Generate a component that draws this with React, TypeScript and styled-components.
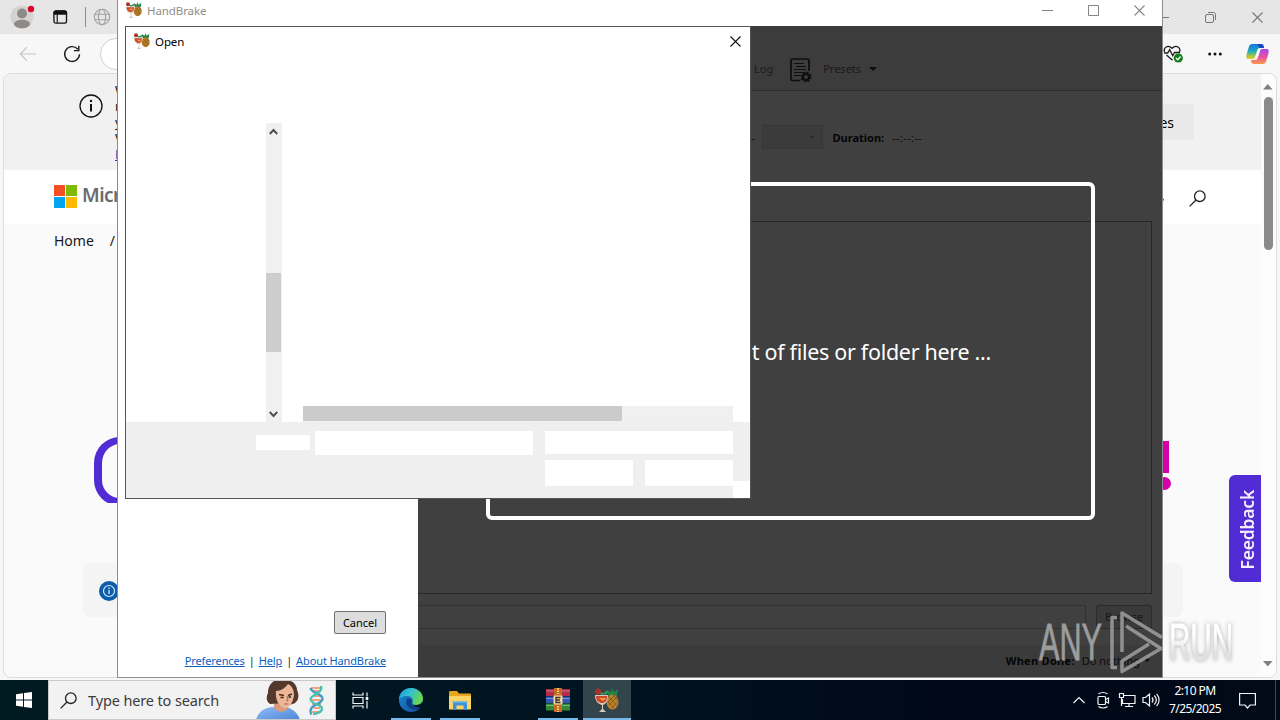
import React, { FC, ReactNode } from "react";
import styled, { createGlobalStyle, css } from "styled-components";

const GlobalStyle = createGlobalStyle`
  * {
    box-sizing: border-box;
  }

  body {
    margin: 0;
    overflow: hidden;
    font-family: "Noto Sans", "Open Sans", sans-serif;
    font-size: 12px;
  }

  svg {
    display: block;
    flex: none;
  }
`;

const Desktop = styled.div`
  position: relative;
  display: flex;
  flex-direction: column;
  width: 1280px;
  height: 720px;
  overflow: hidden;
  background: #f0f3f8;
`;

/* ---------- browser ---------- */

const Browser = styled.div`
  display: flex;
  flex-direction: column;
  height: 680px;
  background: #f7f7f7;
`;

const TabStrip = styled.div`
  display: flex;
  align-items: center;
  justify-content: space-between;
  height: 34px;
  padding: 0 17px 0 10px;
  background: #e6e6e6;
`;

const AddressRow = styled.div`
  display: flex;
  align-items: center;
  justify-content: space-between;
  height: 39px;
  padding: 0 11px 0 19px;
`;

const Group = styled.div<{ $gap: number }>`
  display: flex;
  align-items: center;
  gap: ${(props) => props.$gap}px;
`;

const UrlPill = styled.div`
  width: 200px;
  height: 32px;
  margin-left: -7px;
  border: 1px solid #d2d2d2;
  border-radius: 16px;
  background: #fff;
`;

const TabDivider = styled.div`
  width: 1px;
  height: 20px;
  margin: 0 -8px 0 0;
  background: #8c8c8c;
`;

const PageFrame = styled.div`
  position: relative;
  display: flex;
  height: 605px;
  margin: 0 3px 0 3px;
  border: 1px solid #dcdcdc;
  border-radius: 8px;
  overflow: hidden;
  background: #fafafa;
`;

const Page = styled.div`
  width: 1257px;
  flex: none;
`;

const PageScroll = styled.div`
  display: flex;
  flex-direction: column;
  align-items: center;
  flex: 1;
  padding: 10px 1px 10px 0;
  background: #fcfcfc;
`;

const PageThumb = styled.div`
  width: 9px;
  height: 153px;
  margin-top: 7px;
  border-radius: 5px;
  background: #8a8a8a;
`;

const Spacer = styled.div`
  flex: 1;
`;

const Banner = styled.div`
  display: flex;
  height: 96px;
  padding: 0 67px 0 75px;
  background: #f1f1f1;
`;

const BannerIcon = styled.div`
  padding-top: 20px;
`;

const BannerText = styled.div`
  display: flex;
  flex-direction: column;
  margin-left: 12px;
  padding-top: 8px;
  font-size: 13px;
  line-height: 16px;
  color: #111;

  a {
    color: #0a45b5;
    text-decoration: underline;
  }
`;

const BannerButton = styled.div`
  width: 120px;
  height: 36px;
  margin: 30px 0 0 auto;
  padding: 1px 20px 0 0;
  background: #e9e9e9;
  font-size: 14px;
  line-height: 36px;
  text-align: right;
`;

const SiteHeader = styled.div`
  display: flex;
  align-items: center;
  height: 54px;
  padding: 0 55px 2px 50px;
  background: #fff;
`;

const HeaderSearch = styled.div`
  padding-top: 5px;
`;

const HeaderDot = styled.div`
  width: 3px;
  height: 3px;
  margin: 6px 25px 0 0;
  border-radius: 50%;
  background: #666;
`;

const Tiles = styled.div`
  display: grid;
  grid-template-columns: 11px 11px;
  grid-template-rows: 11px 11px;
  gap: 1px;
`;

const Tile = styled.div<{ $color: string }>`
  background: ${(props) => props.$color};
`;

const Brand = styled.div`
  margin: -2px 0 0 5px;
  font-size: 19px;
  font-weight: 600;
  letter-spacing: -0.5px;
  color: #6b6b6b;
`;

const Crumbs = styled.div`
  display: flex;
  gap: 16px;
  height: 34px;
  padding-left: 50px;
  font-size: 14px;
  line-height: 34px;
  color: #171717;
`;

const Hero = styled.div`
  display: flex;
  justify-content: space-between;
  height: 66px;
  margin-top: 179px;
  padding: 0 90px;
  overflow: hidden;
`;

const HeroLetter = styled.div`
  width: 70px;
  height: 69px;
  border: 8px solid #512bd4;
  border-width: 7px 9px 8px 8px;
  border-radius: 26px;
`;

const HeroMark = styled.div`
  display: flex;
  flex-direction: column;
  align-items: center;
  gap: 4px;
  padding-top: 4px;
`;

const MarkStem = styled.div`
  width: 9px;
  height: 32px;
  background: #d600aa;
`;

const MarkDot = styled.div`
  width: 13px;
  height: 13px;
  border-radius: 50%;
  background: #d600aa;
`;

const InfoCard = styled.div`
  display: flex;
  align-items: center;
  width: 1100px;
  height: 54px;
  margin: 60px 0 0 79px;
  padding: 2px 0 0 16px;
  border-radius: 8px;
  background: #f4f4f4;
`;

const FeedbackTab = styled.div`
  position: absolute;
  top: 401px;
  right: 15px;
  display: flex;
  align-items: center;
  justify-content: center;
  width: 32px;
  height: 107px;
  border-radius: 6px 0 0 6px;
  background: #512bd4;
  color: #f4ecff;
  font-size: 17.5px;
  font-weight: 600;
  letter-spacing: -0.2px;

  span {
    writing-mode: vertical-rl;
    transform: rotate(180deg);
    padding: 0 3px 2px 0;
  }
`;

/* ---------- HandBrake window ---------- */

const AppWindow = styled.div`
  position: absolute;
  top: -1px;
  left: 117px;
  display: flex;
  flex-direction: column;
  width: 1046px;
  height: 679px;
  border: 1px solid #8d8d8d;
  background: #fff;
`;

const AppTitle = styled.div`
  display: flex;
  align-items: center;
  height: 26px;
  padding: 0 17px 6px 8px;
  color: #8e8e8e;
`;

const TitleText = styled.span`
  flex: 1;
  margin-left: 5px;
  font-size: 11.5px;
  letter-spacing: -0.1px;
`;

const AppBody = styled.div`
  display: flex;
  flex: 1;
`;

const SourcePane = styled.div`
  display: flex;
  flex-direction: column;
  align-items: flex-end;
  justify-content: flex-end;
  gap: 19px;
  width: 300px;
  padding: 0 32px 8px 0;
`;

const CancelButton = styled.button`
  width: 52px;
  height: 23px;
  padding: 0;
  border: 1px solid #707070;
  border-radius: 2px;
  background: #dddddd;
  font-family: inherit;
  font-size: 11px;
  color: #000;
`;

const LinkRow = styled.div`
  display: flex;
  gap: 4px;
  height: 16px;
  font-size: 11px;
  line-height: 16px;
  letter-spacing: -0.12px;
  color: #222;
`;

const PaneLink = styled.a`
  color: #0a5fbe;
  text-decoration: underline;
`;

const DimmedPane = styled.div`
  position: relative;
  display: flex;
  flex-direction: column;
  flex: 1;
  background: #404040;
  color: #0c0c0c;
  font-size: 11px;
`;

const Toolbar = styled.div`
  display: flex;
  align-items: flex-start;
  height: 65px;
  padding: 21px 0 0 336px;
  border-bottom: 1px solid #2f2f2f;
  background: #3c3c3c;
  color: #1b1b1b;
`;

const ToolLabel = styled.span<{ $left?: number }>`
  height: 42px;
  margin-left: ${(props) => props.$left || 0}px;
  line-height: 44px;
`;

const ToolIcon = styled.div<{ $left: number; $top: number }>`
  margin: ${(props) => props.$top}px 0 0 ${(props) => props.$left}px;
`;

const TitleRow = styled.div`
  display: flex;
  align-items: center;
  height: 24px;
  margin: 34px 0 72px;
  padding-left: 333px;
`;

const Combo = styled.div`
  display: flex;
  align-items: center;
  justify-content: flex-end;
  width: 61px;
  height: 24px;
  margin: 0 10px 0 7px;
  padding-right: 7px;
  border: 1px solid #373737;
  background: #3b3b3b;
`;

const Bold = styled.b`
  font-weight: 700;
  color: #050505;
`;

const Timecode = styled.span`
  margin-left: 8px;
  letter-spacing: 0.35px;
`;

const TabPanel = styled.div`
  height: 373px;
  margin-right: 10px;
  border: 1px solid #262626;
  border-left: 0;
  padding-right: 5px;

  &::after {
    content: "";
    display: block;
    height: 100%;
    border-right: 1px solid #393939;
  }
`;

const SaveRow = styled.div`
  display: flex;
  gap: 10px;
  height: 24px;
  margin: 11px 10px 16px 0;
`;

const PathField = styled.div`
  flex: 1;
  border: 1px solid #323232;
  border-left: 0;
`;

const BrowseButton = styled.div`
  width: 56px;
  border: 1px solid #2b2b2b;
  border-radius: 2px;
  line-height: 22px;
  text-align: center;
  background: #3a3a3a;
  color: #161616;
`;

const DoneRow = styled.div`
  display: flex;
  align-items: center;
  justify-content: flex-end;
  flex: 1;
  padding: 0 12px 2px 0;
  background: #3b3b3b;

  b {
    margin-right: 7px;
    letter-spacing: 0.3px;
  }

  svg {
    margin-left: 4px;
  }
`;

const DropZone = styled.div`
  position: absolute;
  top: 156px;
  left: 68px;
  display: flex;
  align-items: center;
  justify-content: flex-end;
  width: 609px;
  height: 338px;
  padding: 0 100px 0 0;
  border: 4px solid #fff;
  border-radius: 6px;
  color: #fff;
  font-size: 21.5px;
  letter-spacing: -0.3px;
  white-space: pre;
`;

/* ---------- Open dialog ---------- */

const Dialog = styled.div`
  position: absolute;
  top: 26px;
  left: 125px;
  display: flex;
  flex-direction: column;
  width: 626px;
  height: 473px;
  border: 1px solid #555;
  background: #fff;
`;

const DialogTitle = styled.div`
  display: flex;
  align-items: center;
  height: 29px;
  padding: 0 9.500px 1px 8px;
  color: #000;
`;

const DialogBody = styled.div`
  display: flex;
  height: 366px;
  padding: 67px 17px 0 140px;
`;

const TreeScroll = styled.div`
  display: flex;
  flex-direction: column;
  align-items: center;
  width: 16px;
  padding: 5px 1px 4px 0;
  background: #f0f0f0;
`;

const TreeThumb = styled.div`
  width: 15px;
  height: 79px;
  margin-top: 138px;
  background: #cdcdcd;
`;

const FileList = styled.div`
  display: flex;
  align-items: flex-end;
  flex: 1;
  margin-left: 21px;
`;

const ListScroll = styled.div`
  width: 100%;
  height: 16px;
  background: #f0f0f0;
`;

const ListThumb = styled.div`
  width: 319px;
  height: 15px;
  background: #cbcbcb;
`;

const DialogFooter = styled.div`
  display: flex;
  height: 76px;
  background: #efefef;
`;

const Fields = styled.div`
  display: flex;
  flex-direction: column;
  gap: 5px;
  width: 607px;
  padding: 9px 0 0 130px;
`;

const FieldRow = styled.div`
  display: flex;
  justify-content: flex-end;
`;

const Blank = styled.div<{ $w: number; $h: number; $left: number; $top?: number }>`
  width: ${(props) => props.$w}px;
  height: ${(props) => props.$h}px;
  margin: ${(props) => props.$top || 0}px 0 0 ${(props) => props.$left}px;
  background: #fff;
`;

const Grip = styled.div`
  align-self: flex-end;
  width: 17px;
  height: 17px;
  background: #fff;
`;

/* ---------- taskbar ---------- */

const Taskbar = styled.div`
  display: flex;
  height: 40px;
  background: linear-gradient(90deg, #001a22 0%, #00141f 45%, #00081a 75%, #020a18 100%);
  color: #fff;
`;

const StartButton = styled.div`
  display: flex;
  align-items: center;
  justify-content: center;
  width: 48px;
`;

const SearchBox = styled.div`
  display: flex;
  align-items: center;
  width: 288px;
  padding-left: 11px;
  border: 1px solid #c9c9c9;
  background: #f2f2f2;
  color: #3b3b3b;
  font-size: 14.5px;
  letter-spacing: -0.13px;
`;

const SearchText = styled.span`
  width: 168px;
  margin-left: 11px;
  white-space: nowrap;
`;

const DnaSlot = styled.div`
  margin-left: 3px;
`;

const TaskButton = styled.div<{ $line?: "short" | "full"; $active?: boolean; $left?: number }>`
  position: relative;
  display: flex;
  align-items: center;
  justify-content: center;
  width: 48px;
  margin-left: ${(props) => (props.$left === undefined ? 1 : props.$left)}px;
  background: ${(props) => (props.$active ? "#34444d" : "transparent")};

  ${(props) =>
    props.$line &&
    css`
      &::after {
        content: "";
        position: absolute;
        bottom: 0;
        left: ${props.$line === "full" ? 0 : 4}px;
        right: ${props.$line === "full" ? 0 : 4}px;
        height: 2px;
        background: #76b9ed;
      }
    `}
`;

const Tray = styled.div`
  display: flex;
  align-items: center;
  gap: 6px;
  margin-left: auto;
  padding-right: 4px;
`;

const Clock = styled.div`
  width: 62px;
  margin-left: -2px;
  font-size: 12px;
  line-height: 18px;
  letter-spacing: -0.55px;
  text-align: center;
`;

const NoticeSlot = styled.div`
  display: flex;
  align-items: center;
  width: 42px;
  height: 40px;
  padding-left: 7px;
  margin-right: -5px;
`;

const PeekEdge = styled.div`
  width: 1px;
  height: 40px;
  background: #414854;
`;

const Watermark = styled.svg`
  position: absolute;
  top: 600px;
  left: 1030px;
`;

/* ---------- icons ---------- */

const FruitIcon: FC<{ size: number }> = ({ size }) => (
  <svg width={size} height={size} viewBox="0 0 24 24">
    <path d="M13 8l-1-6 4 2 1-4 2 4 4-3-1 7z" fill="#238249" />
    <path d="M4 3l4 2 5-3-1 4-6 1z" fill="#38965a" />
    <ellipse cx="17.500" cy="14" rx="6" ry="7.500" fill="#b9822c" />
    <path d="M14 9l8 9M13 14l6 6M18 7l5 6M22 9l-8 8M20 7l-7 7M22 14l-5 6" stroke="#7d5119" strokeWidth="0.800" />
    <path d="M0 7h13c0 6-2 9-5 10v4l3 3H4l3-3v-4C3 16 0 13 0 7z" fill="#d9cbb9" />
    <path d="M1 8h11c0 5-2 7-5 7s-6-2-6-7z" fill="#d2472c" />
    <circle cx="3" cy="3.500" r="3" fill="#a8322a" />
    <path d="M4 10l4 3 3-3" fill="#f1a541" />
  </svg>
);

const CloseIcon: FC<{ size: number; color: string }> = ({ size, color }) => (
  <svg width={size} height={size} viewBox="0 0 11 11" stroke={color} strokeWidth="1.100" fill="none">
    <path d="M.5.5l10 10M10.500.5l-10 10" />
  </svg>
);

const CaptionButtons: FC = () => (
  <Group $gap={35}>
    <svg width="11" height="11" stroke="#858585">
      <path d="M0 5.500h11" />
    </svg>
    <svg width="11" height="11" fill="none" stroke="#858585">
      <path d="M.5.5h10v10H.5z" />
    </svg>
    <CloseIcon size={11} color="#858585" />
  </Group>
);

const AvatarIcon: FC = () => (
  <svg width="26" height="28" viewBox="0 0 26 28">
    <circle cx="12" cy="14" r="11.500" fill="#d5d2d0" />
    <circle cx="12" cy="10.500" r="5" fill="#8e8a88" />
    <ellipse cx="12" cy="21" rx="8" ry="4.200" fill="#8e8a88" />
    <circle cx="21" cy="6" r="3.200" fill="#d9082b" />
  </svg>
);

const WorkspaceIcon: FC = () => (
  <svg width="15" height="16" viewBox="0 0 16 16" fill="none" stroke="#111">
    <rect x="1" y="1.600" width="13.400" height="13" rx="2" strokeWidth="1.400" />
    <path d="M1 5V3.500a2 2 0 0 1 2-2h9.500a2 2 0 0 1 2 2V5z" fill="#111" />
    <path d="M4.500 5v9" strokeWidth="1.200" />
  </svg>
);

const GlobeIcon: FC = () => (
  <svg width="18" height="18" viewBox="0 0 18 18" fill="none" stroke="#a2a2a2" strokeWidth="1.100">
    <circle cx="9" cy="9" r="7.700" />
    <ellipse cx="9" cy="9" rx="3.600" ry="7.700" />
    <path d="M2 6.200h14M2 11.800h14" />
  </svg>
);

const BackIcon: FC = () => (
  <svg width="18" height="16" viewBox="0 0 18 16" fill="none" stroke="#c6c6c6" strokeWidth="1.200">
    <path d="M17 8H1.500M8 1.200L1.300 8 8 14.800" />
  </svg>
);

const RefreshIcon: FC = () => (
  <svg width="18" height="18" viewBox="0 0 18 18" fill="none" stroke="#1c1c1c" strokeWidth="1.400">
    <path d="M16.500 9.300A7.400 7.400 0 1 1 14.800 4.300" />
    <path d="M11 5.600h4.800V.8" />
  </svg>
);

const HeartIcon: FC = () => (
  <svg width="21" height="20" viewBox="0 0 21 20" fill="none" stroke="#1b1b1b" strokeWidth="1.300">
    <path d="M1.600 8C0 3.300 5 .5 9 4.300 13 .5 18.300 3.300 16.500 8M3.500 11l6 5.200" />
    <path d="M1 9h3.700l2-3.300 3 6L11.500 8.500H17" />
    <circle cx="15.300" cy="14" r="4.600" fill="#12801a" stroke="none" />
    <path d="M13 14l1.700 1.700 3-3.200" stroke="#fff" />
  </svg>
);

const MoreIcon: FC = () => (
  <svg width="14" height="4" fill="#111">
    <circle cx="1.700" cy="2" r="1.500" />
    <circle cx="7" cy="2" r="1.500" />
    <circle cx="12.300" cy="2" r="1.500" />
  </svg>
);

const CopilotIcon: FC = () => (
  <svg width="23" height="22" viewBox="0 0 23 22">
    <defs>
      <linearGradient id="cpBlue" x1="0" y1="0" x2="0" y2="1">
        <stop offset="0" stopColor="#1472e8" />
        <stop offset=".5" stopColor="#25aeb5" />
        <stop offset=".8" stopColor="#a7c83e" />
        <stop offset="1" stopColor="#f6c42c" />
      </linearGradient>
      <linearGradient id="cpPink" x1="0" y1="0" x2="0" y2="1">
        <stop offset="0" stopColor="#a34bec" />
        <stop offset=".5" stopColor="#e84ea6" />
        <stop offset="1" stopColor="#ff984a" />
      </linearGradient>
    </defs>
    <path d="M6 1h9c2 0 2.600 1.600 3 4l-4-.1c-2 0-2.500 1-3 3L9 14c-.5 1.500-1 2-3 2H2.500C0 16 0 14 .7 11L3 3.500C3.500 2 4.500 1 6 1z" fill="url(#cpBlue)" />
    <path d="M17 21H8c-2 0-2.600-1.600-3-4l4 .1c2 0 2.500-1 3-3L14 8c.5-1.500 1-2 3-2h3.500C23 6 23 8 22.300 11L20 18.500c-.5 1.500-1.500 2.500-3 2.500z" fill="url(#cpPink)" />
    <path d="M11.500 1H15c2 0 2.600 1.600 3 4l-4.500 0z" fill="#1746c4" />
    <path d="M12.500 8L9.800 14.200c1 .3 1.700 0 2.200-1L14 7.500z" fill="#fff" />
  </svg>
);

const InfoIcon: FC = () => (
  <svg width="24" height="24" viewBox="0 0 24 24" fill="none" stroke="#111">
    <circle cx="12" cy="12" r="11" strokeWidth="1.300" />
    <path d="M12 10v7.500" strokeWidth="2" />
    <circle cx="12" cy="7" r="1.200" fill="#111" stroke="none" />
  </svg>
);

const BadgeIcon: FC = () => (
  <svg width="20" height="20" viewBox="0 0 20 20">
    <circle cx="10" cy="10" r="10" fill="#0b5cab" />
    <circle cx="10" cy="10" r="5.500" fill="none" stroke="#d7eafa" strokeWidth="1.200" />
    <path d="M10 9v4M10 6.600v1.300" stroke="#d7eafa" strokeWidth="1.300" />
  </svg>
);

const SearchIcon: FC<{ color: string }> = ({ color }) => (
  <svg width="17" height="17" viewBox="0 0 17 17" fill="none" stroke={color} strokeWidth="1.300">
    <circle cx="10.800" cy="6.200" r="5.300" />
    <path d="M7 10L.6 16.400" />
  </svg>
);

const TriangleIcon: FC<{ down?: boolean }> = ({ down }) => (
  <svg width="10" height="6" fill="#7f7f7f">
    <path d={down ? "M0 0h9.500L4.800 5.500z" : "M0 5.500h9.500L4.800 0z"} />
  </svg>
);

const CaretIcon: FC<{ color: string; size?: number }> = ({ color, size = 8 }) => (
  <svg width={size} height={size / 2} viewBox="0 0 8 4" fill={color}>
    <path d="M0 0h8L4 4z" />
  </svg>
);

const ScrollChevron: FC<{ down?: boolean }> = ({ down }) => (
  <svg width="9" height="7" fill="none" stroke="#4d4d4d" strokeWidth="1.900">
    <path d={down ? "M.8 1l3.700 4L8.200 1" : "M.8 6l3.700-4 3.700 4"} />
  </svg>
);

const PresetsIcon: FC = () => (
  <svg width="22" height="25" viewBox="0 0 22 25" fill="none" stroke="#0e0e0e">
    <path d="M10 22.500H2.500a1.500 1.500 0 0 1-1.500-1.500V2.500A1.500 1.500 0 0 1 2.500 1h15A1.500 1.500 0 0 1 19 2.500V13" strokeWidth="1.700" />
    <path d="M4 5.500h10M6 8.500h10M4 11.500h12M4 14.500h9M4 17.500h6" strokeWidth="1.200" />
    <circle cx="16" cy="19" r="3.200" strokeWidth="2.400" />
    <circle cx="16" cy="19" r="4.700" strokeWidth="1.800" strokeDasharray="1.850 1.850" />
  </svg>
);

const WindowsIcon: FC = () => (
  <svg width="16" height="16" viewBox="0 0 16 16" fill="#fff">
    <path d="M0 2.300L7 1.300v6.200H0zM8 1.100L16 0v7.500H8zM0 8.500h7v6.200l-7-1zM8 8.500h8V16l-8-1.100z" />
  </svg>
);

const PortraitIcon: FC = () => (
  <svg width="50" height="38" viewBox="0 1 50 38">
    <defs>
      <linearGradient id="shirt" x1="0" y1="0" x2="1" y2="1">
        <stop offset="0" stopColor="#8fbcf5" />
        <stop offset="1" stopColor="#4d86d8" />
      </linearGradient>
    </defs>
    <path d="M0 40c2-8 8-12 16-13l14 0c7 2 12 6 14 13z" fill="url(#shirt)" />
    <path d="M18 22h14v6c-3 5-10 5-14 0z" fill="#d99b7e" />
    <path d="M14 24c-4-3-4-7-2-11C12 5 17-1 25 0c8-2 16 3 16 10 2 4 2 9-1 12-4 4-8 2-11 1z" fill="#54382d" />
    <path d="M20 11c5 0 9-3 12-7 4 2 6 6 6 11-1 7-4 13-9 13-6-1-10-8-9-17z" fill="#ecb797" />
    <path d="M23 14.500l5 1M32 15.500l4-1.500" stroke="#442b22" strokeWidth="1.400" />
    <path d="M24.500 17.500h3M32.500 17h2.500" stroke="#2d2523" strokeWidth="1.300" />
    <path d="M31 16l1 4.500-2 .5M28 24h4.500" stroke="#ad644e" fill="none" />
  </svg>
);

const DnaIcon: FC = () => (
  <svg width="15" height="31" viewBox="0 0 15 31" fill="none">
    <path d="M2 3h9M3 6h9M5 11h6M3 15h9M3 19h9M5 23h6M3 27h9" stroke="#e98a5b" strokeWidth="1.300" />
    <path d="M1.500 3c1 6 12 5 12 11 0 5-12 5-12 12 0 2 0 3 1 3.500" stroke="#3d9bc9" strokeWidth="2.300" />
    <path d="M12 1c2 8-10 8-10.500 13C2 20 14 19 13 24c0 3-6 5-9 5" stroke="#48bfb3" strokeWidth="2.300" />
  </svg>
);

const TaskViewIcon: FC = () => (
  <svg width="17" height="17" viewBox="0 0 17 17" fill="none" stroke="#f4f4f4" strokeWidth="1.200">
    <path d="M1 .5v2.500h10V.5M1 16.500V14h10v2.500M1 5.500h10v6H1z" />
    <path d="M15 .5v4M15 9v7.500" />
    <path d="M15 5v3" strokeWidth="2.600" />
  </svg>
);

const EdgeIcon: FC = () => (
  <svg width="26" height="26" viewBox="0 0 26 26">
    <defs>
      <linearGradient id="edgeTop" x1="0" y1="0" x2="1" y2="0.400">
        <stop offset="0" stopColor="#2296de" />
        <stop offset=".5" stopColor="#31c2d3" />
        <stop offset="1" stopColor="#68d84f" />
      </linearGradient>
      <linearGradient id="edgeLow" x1="0" y1="0" x2="1" y2="1">
        <stop offset="0" stopColor="#1b8bd8" />
        <stop offset="1" stopColor="#114a94" />
      </linearGradient>
    </defs>
    <circle cx="13" cy="13" r="12" fill="url(#edgeLow)" />
    <path d="M1 13C1 5 7 1 13 1s12 4.500 12 10.500c0 4-3 6.500-7 6.500-3 0-4-1-3.500-2.500 1.500-3-1-6.500-5-6.500C5 9 1.500 11 1 13z" fill="url(#edgeTop)" />
    <path d="M9 12c-2 5 1 10 7 10.500 3 .2 5.500-1 7-2.500-3 1-10 0-9.500-4.500 1-2-1.500-5-4.500-3.500z" fill="#0c3f86" />
    <path d="M14.500 15.500c-.5 2 1 2.600 3.500 2.600 3 0 5.500-1 6.600-3.500l1 4.500-2.500 1.500c-3.500.5-8.500-1-8.600-5.100z" fill="#001720" />
  </svg>
);

const FolderIcon: FC = () => (
  <svg width="24" height="21" viewBox="0 0 24 21">
    <path d="M1 2.500C1 1.500 1.500 1 2.500 1H9l2 2.500h11c.7 0 1 .5 1 1V19H1z" fill="#e8a520" />
    <path d="M1 6h22v13.500H1z" fill="#fcd565" />
    <path d="M5 20v-8.500h14V20h-3.500v-4.500h-7V20z" fill="#3d93d9" />
    <path d="M4 12h16" stroke="#7bbdec" strokeWidth="1.200" />
  </svg>
);

const ArchiveIcon: FC = () => (
  <svg width="24" height="24" viewBox="0 0 24 24">
    <rect x="0" y="1" width="24" height="7" fill="#b22c4b" />
    <rect x="0" y="8.500" width="24" height="6.500" fill="#3257b8" />
    <rect x="0" y="15.500" width="24" height="7" fill="#328a38" />
    <path d="M0 3h24M0 10.500h24M0 17.500h24" stroke="#fff" strokeOpacity=".35" />
    <rect x="8" y="0" width="8" height="24" fill="#c4692b" />
    <path d="M12 0v6M12 18v6" stroke="#f4d36a" strokeWidth="2" strokeDasharray="1.500 1" />
    <rect x="7.500" y="7.500" width="9" height="9" rx="1" fill="#f0d9a0" />
    <path d="M14.500 9.500h-4.500v5h4.500M10 12h4" stroke="#402c20" strokeWidth="1.300" fill="none" />
  </svg>
);

const TrayIcon: FC<{ children: ReactNode }> = ({ children }) => (
  <svg width="18" height="18" viewBox="0 0 18 18" fill="none" stroke="#f3f3f3" strokeWidth="1.200">
    {children}
  </svg>
);

const AnyRun: FC = () => (
  <Watermark width="245" height="80" fontFamily="Liberation Sans, sans-serif" fontSize="52">
    <defs>
      <linearGradient id="runFade" x1="0" y1="0" x2="0" y2="1">
        <stop offset="0.400" stopColor="#ffffff" />
        <stop offset="0.700" stopColor="#e1e1e1" />
      </linearGradient>
    </defs>
    <text
      x="9"
      y="60"
      textLength="63"
      lengthAdjust="spacingAndGlyphs"
      fill="#9c9c9c"
      stroke="#9c9c9c"
      strokeWidth="0.800"
    >
      ANY
    </text>
    <g fill="none" stroke="#a0a0a0" strokeOpacity=".85" strokeWidth="3.500" strokeLinejoin="round">
      <path d="M87 17.500h-5v50h5M92 52V13l40 24.500M96 26l35 22.500-39 23V61l27-17" />
    </g>
    <text
      x="139"
      y="60"
      textLength="64"
      lengthAdjust="spacingAndGlyphs"
      fill="url(#runFade)"
      stroke="url(#runFade)"
      strokeWidth="0.800"
      style={{ filter: "drop-shadow(0 0 2px rgba(0,0,0,.3))" }}
    >
      RUN
    </text>
  </Watermark>
);

/* ---------- screens ---------- */

const BrowserWindow: FC = () => (
  <Browser>
    <TabStrip>
      <Group $gap={17}>
        <AvatarIcon />
        <WorkspaceIcon />
        <Group $gap={15}>
          <TabDivider />
          <GlobeIcon />
        </Group>
      </Group>
      <Group $gap={36}>
        <svg width="11" height="11" stroke="#777">
          <path d="M0 5.500h11" />
        </svg>
        <svg width="11" height="11" fill="none" stroke="#777">
          <rect x=".5" y="2.500" width="8" height="8" rx="1.500" />
          <path d="M3 .5h5.500a2 2 0 0 1 2 2V8" />
        </svg>
        <CloseIcon size={11} color="#777" />
      </Group>
    </TabStrip>
    <AddressRow>
      <Group $gap={26}>
        <BackIcon />
        <RefreshIcon />
        <UrlPill />
      </Group>
      <Group $gap={24}>
        <HeartIcon />
        <MoreIcon />
        <CopilotIcon />
      </Group>
    </AddressRow>
    <PageFrame>
      <Page>
        <Banner>
          <BannerIcon>
            <InfoIcon />
          </BannerIcon>
          <BannerText>
            <span>W</span>
            <span>m</span>
            <span>y</span>
            <span>V</span>
            <a>P</a>
          </BannerText>
          <BannerButton>es</BannerButton>
        </Banner>
        <SiteHeader>
          <Tiles>
            <Tile $color="#f25022" />
            <Tile $color="#7fba00" />
            <Tile $color="#00a4ef" />
            <Tile $color="#ffb900" />
          </Tiles>
          <Brand>Micr</Brand>
          <Spacer />
          <HeaderDot />
          <HeaderSearch>
            <SearchIcon color="#222" />
          </HeaderSearch>
        </SiteHeader>
        <Crumbs>
          <span>Home</span>
          <span>/</span>
        </Crumbs>
        <Hero>
          <HeroLetter />
          <HeroMark>
            <MarkStem />
            <MarkDot />
          </HeroMark>
        </Hero>
        <InfoCard>
          <BadgeIcon />
        </InfoCard>
      </Page>
      <PageScroll>
        <TriangleIcon />
        <PageThumb />
        <Spacer />
        <TriangleIcon down />
      </PageScroll>
      <FeedbackTab>
        <span>Feedback</span>
      </FeedbackTab>
    </PageFrame>
  </Browser>
);

const HandBrake: FC = () => (
  <AppWindow>
    <AppTitle>
      <FruitIcon size={16} />
      <TitleText>HandBrake</TitleText>
      <CaptionButtons />
    </AppTitle>
    <AppBody>
      <SourcePane>
        <CancelButton>Cancel</CancelButton>
        <LinkRow>
          <PaneLink>Preferences</PaneLink>|<PaneLink>Help</PaneLink>|
          <PaneLink>About HandBrake</PaneLink>
        </LinkRow>
      </SourcePane>
      <DimmedPane>
        <Toolbar>
          <ToolLabel>Log</ToolLabel>
          <ToolIcon $left={17} $top={11}>
            <PresetsIcon />
          </ToolIcon>
          <ToolLabel $left={11}>Presets</ToolLabel>
          <ToolIcon $left={8} $top={20}>
            <CaretIcon color="#0c0c0c" />
          </ToolIcon>
        </Toolbar>
        <TitleRow>
          -
          <Combo>
            <CaretIcon color="#2c2c2c" size={6} />
          </Combo>
          <Bold>Duration:</Bold>
          <Timecode>--:--:--</Timecode>
        </TitleRow>
        <TabPanel />
        <SaveRow>
          <PathField />
          <BrowseButton>Browse</BrowseButton>
        </SaveRow>
        <DoneRow>
          <Bold>When Done:</Bold>
          <span>Do nothing</span>
          <CaretIcon color="#0c0c0c" size={6} />
        </DoneRow>
        <DropZone>t of files or folder here ...</DropZone>
      </DimmedPane>
    </AppBody>
  </AppWindow>
);

const OpenDialog: FC = () => (
  <Dialog>
    <DialogTitle>
      <FruitIcon size={16} />
      <TitleText>Open</TitleText>
      <CloseIcon size={11} color="#111" />
    </DialogTitle>
    <DialogBody>
      <TreeScroll>
        <ScrollChevron />
        <TreeThumb />
        <Spacer />
        <ScrollChevron down />
      </TreeScroll>
      <FileList>
        <ListScroll>
          <ListThumb />
        </ListScroll>
      </FileList>
    </DialogBody>
    <DialogFooter>
      <Fields>
        <FieldRow>
          <Blank $w={54} $h={15} $left={0} $top={4} />
          <Blank $w={218} $h={24} $left={5} />
          <Blank $w={188} $h={23} $left={12} />
        </FieldRow>
        <FieldRow>
          <Blank $w={88} $h={26} $left={0} />
          <Blank $w={88} $h={26} $left={12} />
        </FieldRow>
      </Fields>
      <Grip />
    </DialogFooter>
  </Dialog>
);

const App: FC = () => (
  <>
    <GlobalStyle />
    <Desktop>
      <BrowserWindow />
      <Taskbar>
        <StartButton>
          <WindowsIcon />
        </StartButton>
        <SearchBox>
          <SearchIcon color="#222" />
          <SearchText>Type here to search</SearchText>
          <PortraitIcon />
          <DnaSlot>
            <DnaIcon />
          </DnaSlot>
        </SearchBox>
        <TaskButton $left={0}>
          <TaskViewIcon />
        </TaskButton>
        <TaskButton $left={3} $line="short">
          <EdgeIcon />
        </TaskButton>
        <TaskButton $line="short">
          <FolderIcon />
        </TaskButton>
        <TaskButton />
        <TaskButton $line="short">
          <ArchiveIcon />
        </TaskButton>
        <TaskButton $line="full" $active>
          <FruitIcon size={24} />
        </TaskButton>
        <Tray>
          <TrayIcon>
            <path d="M3.500 12L9 6.500l5.500 5.500" />
          </TrayIcon>
          <TrayIcon>
            <rect x="4" y="5.500" width="7.500" height="8" rx="1" />
            <path d="M11.500 8.500l3-1.500v5l-3-1.500M4.500 3C7 1 11 1 13.500 3M4.500 15.500c2.500 2 6.500 2 9 0" />
          </TrayIcon>
          <TrayIcon>
            <path d="M6 4.500h11v8H4.500V8M7 15.500h8M11 12.500v3M1.500 2.500h4v4h-4zM3.500 6.500V15" />
          </TrayIcon>
          <TrayIcon>
            <path d="M1 6.500h2.500L7.500 3v12l-4-3.500H1zM10 6.500c1.300 1.500 1.300 3.500 0 5M12.300 4.500c2.500 2.700 2.500 6.300 0 9M14.600 2.800c3.300 3.700 3.300 8.700 0 12.400" />
          </TrayIcon>
          <Clock>
            2:10 PM
            <br />
            7/25/2025
          </Clock>
          <NoticeSlot>
            <svg width="17" height="17" viewBox="0 0 17 17" fill="none" stroke="#f3f3f3" strokeWidth="1.200">
              <path d="M.6 1.500h15.800v11.500H11l-2.500 3-2.500-3H.6z" />
            </svg>
          </NoticeSlot>
          <PeekEdge />
        </Tray>
      </Taskbar>
      <HandBrake />
      <OpenDialog />
      <AnyRun />
    </Desktop>
  </>
);

export default App;
